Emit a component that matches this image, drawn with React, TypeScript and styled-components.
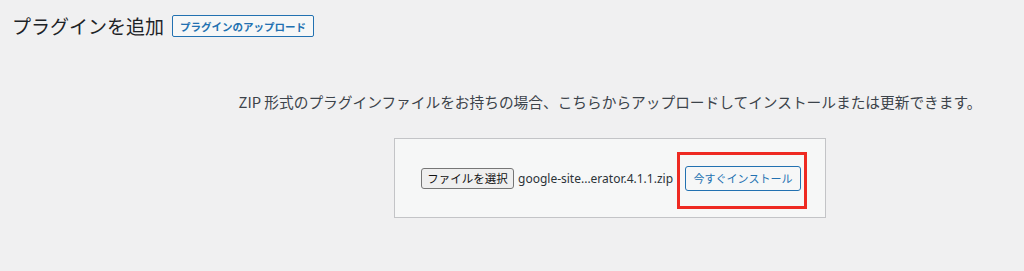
import styled, { createGlobalStyle } from "styled-components";

const GlobalStyle = createGlobalStyle`
  html, body {
    margin: 0;
    padding: 0;
    background: #f0f0f1;
  }
  body {
    font-family: "Noto Sans", "Noto Sans CJK JP", sans-serif;
    color: #3c434a;
  }
`;

const Page = styled.div`
  width: 1024px;
  height: 271px;
  padding: 15px 0 0 12px;
  box-sizing: border-box;
  overflow: hidden;
`;

const HeaderRow = styled.div`
  display: flex;
  align-items: center;
  gap: 8px;
  height: 22px;
`;

const Title = styled.h1`
  margin: 0;
  font-size: 19px;
  font-weight: 400;
  line-height: 22px;
  color: #1d2327;
  font-family: "Noto Sans CJK JP", sans-serif;
`;

const UploadToggle = styled.button`
  height: 22px;
  padding: 0 7px;
  border: 1px solid #2271b1;
  border-radius: 2px;
  background: #f6f7f7;
  color: #2271b1;
  font-family: "Noto Sans CJK JP", sans-serif;
  font-size: 10.5px;
  font-weight: 700;
  box-sizing: border-box;
`;

const UploadSection = styled.div`
  display: flex;
  flex-direction: column;
  align-items: center;
  margin: 55px 0 0 184px;
`;

const Description = styled.p`
  margin: 0;
  font-size: 14.7px;
  line-height: 20px;
  color: #3c434a;
  font-family: "Noto Sans CJK JP", sans-serif;
  white-space: nowrap;
`;

const UploadForm = styled.form`
  margin-top: 26px;
  display: flex;
  align-items: center;
  width: 432px;
  height: 80px;
  padding: 0 24px 0 26px;
  box-sizing: border-box;
  border: 1px solid #c3c4c7;
  background: #f6f7f7;
`;

const FileButton = styled.span`
  display: inline-flex;
  align-items: center;
  justify-content: center;
  flex-shrink: 0;
  width: 93px;
  height: 21px;
  box-sizing: border-box;
  border: 1px solid #767676;
  border-radius: 3px;
  background: #efefef;
  color: #111;
  font-family: "Noto Sans CJK JP", sans-serif;
  font-size: 11.5px;
`;

const FileName = styled.span`
  flex-shrink: 0;
  margin-left: 4px;
  width: 156px;
  font-size: 12px;
  color: #2c3338;
  white-space: nowrap;
`;

const InstallWrap = styled.div`
  position: relative;
  flex-shrink: 0;
  margin-left: 11px;
`;

const InstallButton = styled.button`
  width: 116px;
  height: 25px;
  box-sizing: border-box;
  border: 1px solid #2271b1;
  border-radius: 3px;
  background: #f6f7f7;
  color: #2271b1;
  font-family: "Noto Sans CJK JP", sans-serif;
  font-size: 11px;
  padding: 0;
`;

const Highlight = styled.div`
  position: absolute;
  left: -8px;
  right: -6px;
  top: -14px;
  bottom: -18px;
  border: 3px solid #ee2a22;
  pointer-events: none;
`;

const App = () => {
  return (
    <Page>
      <GlobalStyle />
      <HeaderRow>
        <Title>プラグインを追加</Title>
        <UploadToggle type="button">プラグインのアップロード</UploadToggle>
      </HeaderRow>

      <UploadSection>
        <Description>
          ZIP 形式のプラグインファイルをお持ちの場合、こちらからアップロードしてインストールまたは更新できます。
        </Description>
        <UploadForm onSubmit={(e) => e.preventDefault()}>
          <FileButton>ファイルを選択</FileButton>
          <FileName>google-site...erator.4.1.1.zip</FileName>
          <InstallWrap>
            <InstallButton type="submit">今すぐインストール</InstallButton>
            <Highlight />
          </InstallWrap>
        </UploadForm>
      </UploadSection>
    </Page>
  );
};

export default App;
